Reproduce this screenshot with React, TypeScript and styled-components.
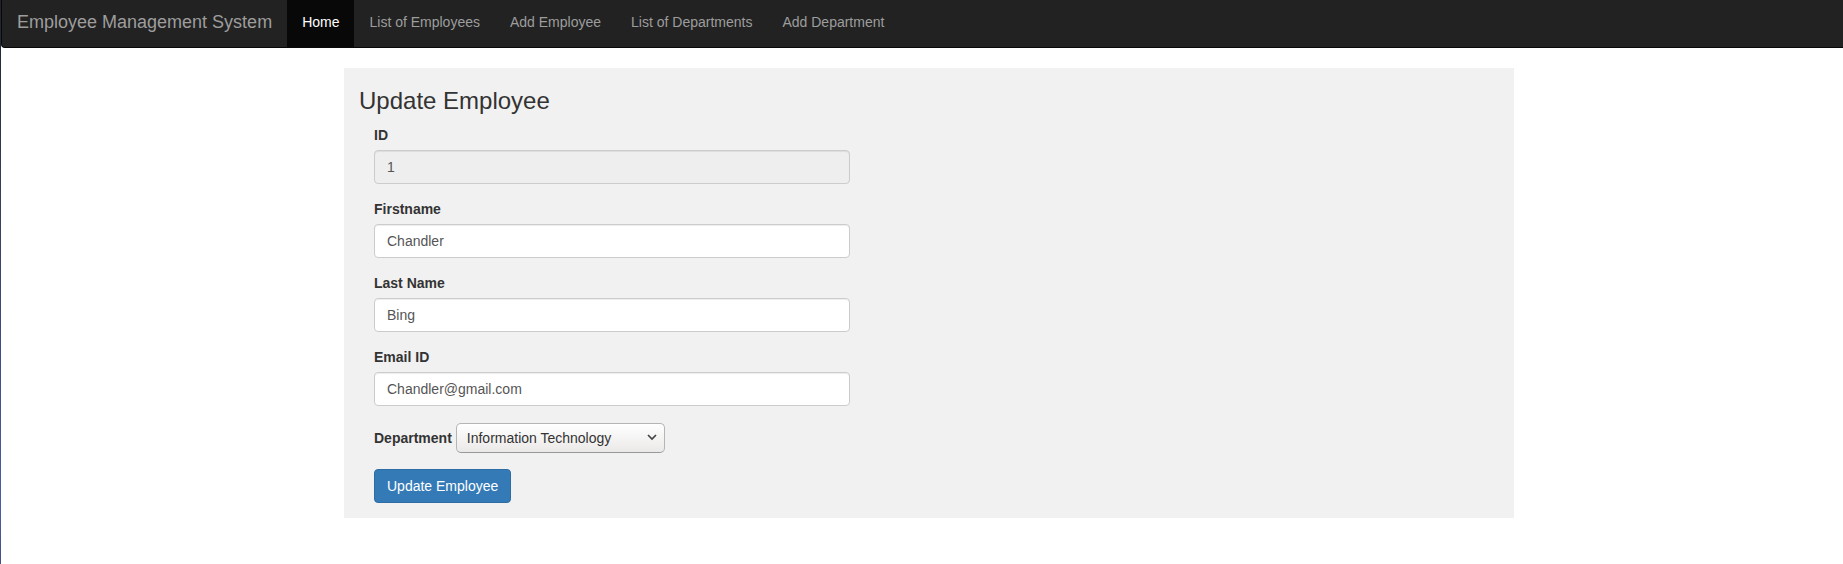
import React from "react";
import styled, { createGlobalStyle, css } from "styled-components";

const Global = createGlobalStyle`
  * { box-sizing: border-box; }
  body { margin: 0; background: #fff; color: #333; font: 14px/20px "Liberation Sans", Arial, sans-serif; }
  input, select, button { font: inherit; }
`;

const Page = styled.div`
  min-height: 100vh;
  padding-left: 1px;
  background: linear-gradient(#20222e, #343a58 30%, #4a5fa4 90%, #454f80) left / 1px 100% no-repeat;
`;

const Navbar = styled.nav`
  display: flex;
  min-height: 48px;
  margin-bottom: 20px;
  padding: 0 15px;
  background: #222;
  border: solid #080808;
  border-width: 0 0 1px 1px;
  border-radius: 0 0 0 4px;
`;

const Brand = styled.a`
  padding: 12px 15px 15px 0;
  color: #9d9d9d;
  font-size: 18px;
  text-decoration: none;
`;

const Menu = styled.ul`
  display: flex;
  margin: 0;
  padding: 0;
  list-style: none;
`;

const MenuLink = styled.a<{ $active?: boolean }>`
  display: block;
  padding: 12px 15px 15px;
  color: #9d9d9d;
  text-decoration: none;
  ${(p) => p.$active && css`color: #fff; background: #080808;`}
`;

const Content = styled.main`
  padding-left: 14px;
`;

const Panel = styled.section`
  max-width: 1170px;
  margin: 0 auto;
  padding: 15px;
  background: #f1f1f1;
`;

const Title = styled.h1`
  margin: 5px 0 11px;
  font-size: 24px;
  line-height: 26px;
  font-weight: 500;
`;

const Form = styled.form`
  width: 506px;
  max-width: 100%;
  padding: 0 15px;
`;

const Field = styled.div`
  margin-bottom: 15px;
`;

const InlineField = styled.div`
  display: flex;
  align-items: center;
  gap: 4px;
  margin: 17px 0 16px;
`;

const Label = styled.label`
  font-weight: 700;
`;

const TextInput = styled.input`
  display: block;
  width: 100%;
  height: 34px;
  margin-top: 5px;
  padding: 6px 12px;
  color: #555;
  background: #fff;
  border: 1px solid #ccc;
  border-radius: 4px;
  box-shadow: inset 0 1px 1px rgba(0, 0, 0, 0.075);
  &:disabled { background: #eee; }
`;

const SelectWrap = styled.span`
  position: relative;
  display: block;
`;

const Select = styled.select`
  display: block;
  appearance: none;
  width: 209px;
  height: 30px;
  padding: 0 10px;
  color: #333;
  background: linear-gradient(#fff, #ebe9e8);
  border: 1px solid #b5b5b5;
  border-bottom-color: #999;
  border-radius: 5px;
`;

const Chevron = styled.svg`
  position: absolute;
  right: 8px;
  top: 10px;
  pointer-events: none;
`;

const Submit = styled.button`
  display: block;
  height: 34px;
  padding: 6px 12px;
  color: #fff;
  background: #337ab7;
  border: 1px solid #2e6da4;
  border-radius: 4px;
`;

const links = ["Home", "List of Employees", "Add Employee", "List of Departments", "Add Department"];

const fields = [
  { id: "id", label: "ID", value: "1", disabled: true },
  { id: "firstname", label: "Firstname", value: "Chandler" },
  { id: "lastname", label: "Last Name", value: "Bing" },
  { id: "email", label: "Email ID", value: "Chandler@gmail.com" },
];

export default function App() {
  return (
    <Page>
      <Global />
      <Navbar>
        <Brand href="#">Employee Management System</Brand>
        <Menu>
          {links.map((text, i) => (
            <li key={text}>
              <MenuLink href="#" $active={i === 0}>{text}</MenuLink>
            </li>
          ))}
        </Menu>
      </Navbar>
      <Content>
        <Panel>
          <Title>Update Employee</Title>
          <Form onSubmit={(e) => e.preventDefault()}>
            {fields.map((f) => (
              <Field key={f.id}>
                <Label htmlFor={f.id}>{f.label}</Label>
                <TextInput id={f.id} defaultValue={f.value} disabled={f.disabled} />
              </Field>
            ))}
            <InlineField>
              <Label htmlFor="department">Department</Label>
              <SelectWrap>
                <Select id="department">
                  <option>Information Technology</option>
                </Select>
                <Chevron width="10" height="8" viewBox="0 0 10 8" aria-hidden="true">
                  <path d="M1 2l4 4 4-4" fill="none" stroke="#444" strokeWidth="1.7" />
                </Chevron>
              </SelectWrap>
            </InlineField>
            <Submit type="submit">Update Employee</Submit>
          </Form>
        </Panel>
      </Content>
    </Page>
  );
}
